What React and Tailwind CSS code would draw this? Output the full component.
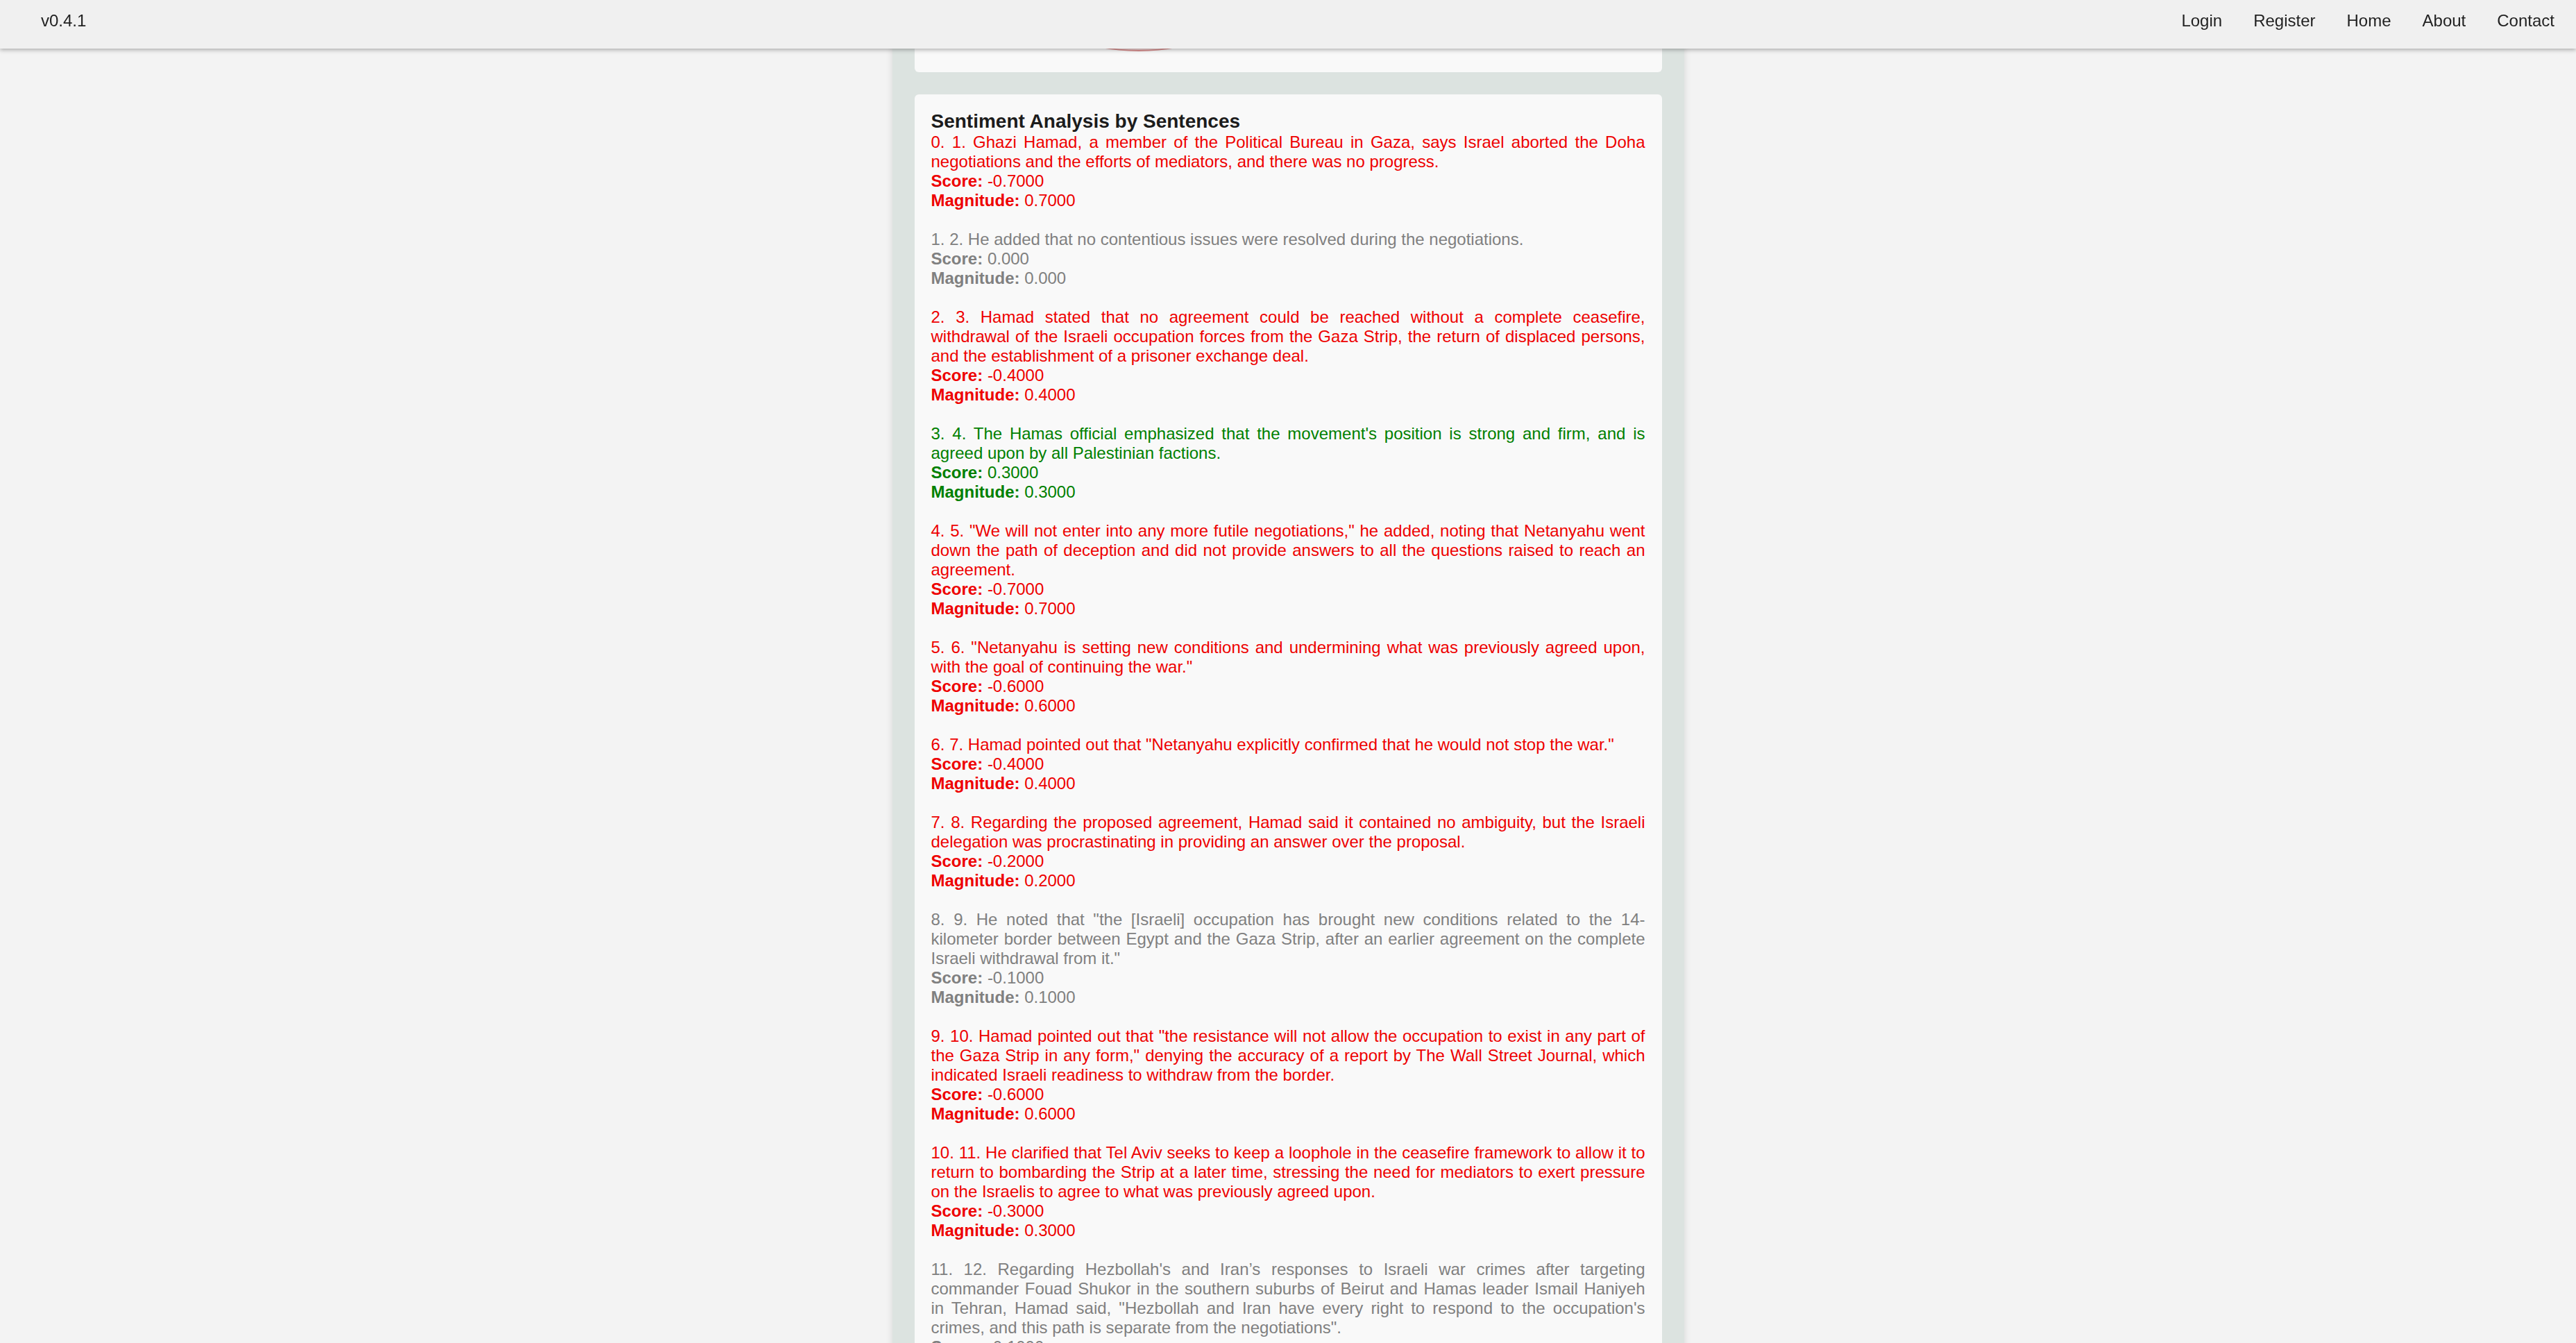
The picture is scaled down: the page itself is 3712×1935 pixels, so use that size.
import React from "react";

const sentences = [
  {
    text: "0. 1. Ghazi Hamad, a member of the Political Bureau in Gaza, says Israel aborted the Doha negotiations and the efforts of mediators, and there was no progress.",
    score: "-0.7000",
    magnitude: "0.7000",
    tone: "neg",
  },
  {
    text: "1. 2. He added that no contentious issues were resolved during the negotiations.",
    score: "0.000",
    magnitude: "0.000",
    tone: "neutral",
  },
  {
    text: "2. 3. Hamad stated that no agreement could be reached without a complete ceasefire, withdrawal of the Israeli occupation forces from the Gaza Strip, the return of displaced persons, and the establishment of a prisoner exchange deal.",
    score: "-0.4000",
    magnitude: "0.4000",
    tone: "neg",
  },
  {
    text: "3. 4. The Hamas official emphasized that the movement's position is strong and firm, and is agreed upon by all Palestinian factions.",
    score: "0.3000",
    magnitude: "0.3000",
    tone: "pos",
  },
  {
    text: '4. 5. "We will not enter into any more futile negotiations," he added, noting that Netanyahu went down the path of deception and did not provide answers to all the questions raised to reach an agreement.',
    score: "-0.7000",
    magnitude: "0.7000",
    tone: "neg",
  },
  {
    text: '5. 6. "Netanyahu is setting new conditions and undermining what was previously agreed upon, with the goal of continuing the war."',
    score: "-0.6000",
    magnitude: "0.6000",
    tone: "neg",
  },
  {
    text: '6. 7. Hamad pointed out that "Netanyahu explicitly confirmed that he would not stop the war."',
    score: "-0.4000",
    magnitude: "0.4000",
    tone: "neg",
  },
  {
    text: "7. 8. Regarding the proposed agreement, Hamad said it contained no ambiguity, but the Israeli delegation was procrastinating in providing an answer over the proposal.",
    score: "-0.2000",
    magnitude: "0.2000",
    tone: "neg",
  },
  {
    text: '8. 9. He noted that "the [Israeli] occupation has brought new conditions related to the 14-kilometer border between Egypt and the Gaza Strip, after an earlier agreement on the complete Israeli withdrawal from it."',
    score: "-0.1000",
    magnitude: "0.1000",
    tone: "neutral",
  },
  {
    text: '9. 10. Hamad pointed out that "the resistance will not allow the occupation to exist in any part of the Gaza Strip in any form," denying the accuracy of a report by The Wall Street Journal, which indicated Israeli readiness to withdraw from the border.',
    score: "-0.6000",
    magnitude: "0.6000",
    tone: "neg",
  },
  {
    text: "10. 11. He clarified that Tel Aviv seeks to keep a loophole in the ceasefire framework to allow it to return to bombarding the Strip at a later time, stressing the need for mediators to exert pressure on the Israelis to agree to what was previously agreed upon.",
    score: "-0.3000",
    magnitude: "0.3000",
    tone: "neg",
  },
  {
    text: '11. 12. Regarding Hezbollah\'s and Iran’s responses to Israeli war crimes after targeting commander Fouad Shukor in the southern suburbs of Beirut and Hamas leader Ismail Haniyeh in Tehran, Hamad said, "Hezbollah and Iran have every right to respond to the occupation\'s crimes, and this path is separate from the negotiations".',
    score: "-0.1000",
    magnitude: "0.1000",
    tone: "neutral",
  },
];

const toneClass = {
  neg: "text-[#ee0000]",
  pos: "text-[#008000]",
  neutral: "text-[#808080]",
};

function Navbar() {
  return (
    <header className="fixed top-0 left-0 right-0 z-10 flex h-[70px] justify-between bg-[#f0f0f0] pl-[59px] pr-[31px] pt-[16px] text-[24px] leading-[28px] text-[#222] shadow-[0_2px_6px_rgba(0,0,0,0.3)]">
      <span>v0.4.1</span>
      <nav className="flex gap-[45px]">
        <a>Login</a>
        <a>Register</a>
        <a>Home</a>
        <a>About</a>
        <a>Contact</a>
      </nav>
    </header>
  );
}

function SentenceItem({ item }) {
  return (
    <div className={`mb-[28px] ${toneClass[item.tone]}`}>
      <p className="text-justify">{item.text}</p>
      <p>
        <b>Score:</b> {item.score}
      </p>
      <p>
        <b>Magnitude:</b> {item.magnitude}
      </p>
    </div>
  );
}

export default function App() {
  return (
    <div className="relative h-[1935px] overflow-hidden bg-[#f3f3f3] font-['Liberation_Sans',Arial,sans-serif]">
      <Navbar />
      <main className="mx-auto w-[1141px] bg-[#dce3e0] px-[32px] shadow-[0_0_10px_rgba(0,0,0,0.12)]">
        {/* chart card, scrolled mostly out of view */}
        <section className="relative h-[104px] overflow-hidden rounded-b-[6px] bg-[#f9f9f9]">
          <svg
            className="absolute left-[-27px] top-0"
            width="700"
            height="104"
            viewBox="0 0 700 104"
          >
            <circle cx="350" cy="-227" r="300" fill="#efd0d0" stroke="#d98f8f" strokeWidth="2" />
          </svg>
        </section>

        <section className="mt-[32px] rounded-[6px] bg-[#f9f9f9] px-[24px] pt-[23px] pb-[24px]">
          <h3 className="text-[28px] font-bold leading-[32px] text-[#1c1c1c]">
            Sentiment Analysis by Sentences
          </h3>
          <div className="text-[24px] leading-[28px]">
            {sentences.map((s, i) => (
              <SentenceItem key={i} item={s} />
            ))}
          </div>
        </section>
      </main>
    </div>
  );
}
